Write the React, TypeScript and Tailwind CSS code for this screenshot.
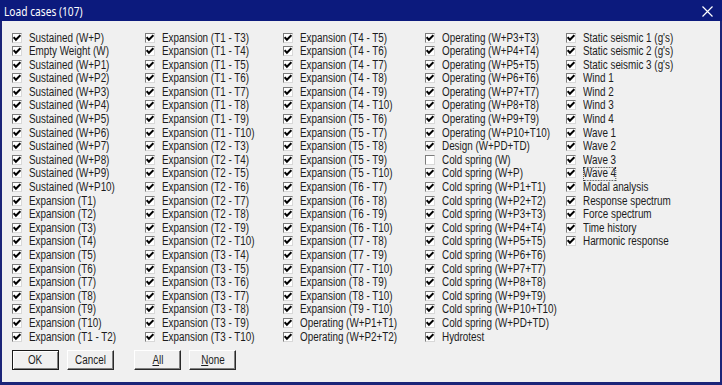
import React from "react";

type Item = { label: string; checked?: boolean; focus?: boolean };

const pairs: string[] = [];
for (let a = 1; a < 10; a++) {
  for (let b = a + 1; b <= 10; b++) pairs.push(`Expansion (T${a} - T${b})`);
}
const range = (n: number, f: (i: number) => string) =>
  Array.from({ length: n }, (_, i) => f(i + 1));

const columns: Item[][] = [
  [
    "Sustained (W+P)",
    "Empty Weight (W)",
    ...range(10, (i) => `Sustained (W+P${i})`),
    ...range(10, (i) => `Expansion (T${i})`),
    pairs[0],
  ].map((label) => ({ label })),
  pairs.slice(1, 24).map((label) => ({ label })),
  [
    ...pairs.slice(24),
    "Operating (W+P1+T1)",
    "Operating (W+P2+T2)",
  ].map((label) => ({ label })),
  [
    ...range(8, (i) => `Operating (W+P${i + 2}+T${i + 2})`),
    "Design (W+PD+TD)",
    "Cold spring (W)",
    "Cold spring (W+P)",
    ...range(10, (i) => `Cold spring (W+P${i}+T${i})`),
    "Cold spring (W+PD+TD)",
    "Hydrotest",
  ].map((label) => ({ label, checked: label !== "Cold spring (W)" })),
  [
    ...range(3, (i) => `Static seismic ${i} (g's)`),
    ...range(4, (i) => `Wind ${i}`),
    ...range(4, (i) => `Wave ${i}`),
    "Modal analysis",
    "Response spectrum",
    "Force spectrum",
    "Time history",
    "Harmonic response",
  ].map((label) => ({ label, focus: label === "Wave 4" })),
];

function CheckBox({ checked }: { checked: boolean }) {
  return (
    <div className="mt-[1px] w-[10px] h-[10px] shrink-0 bg-white border border-t-[#7c7c7c] border-l-[#7c7c7c] border-b-[#d8d8d8] border-r-[#d8d8d8] flex items-center justify-center">
      {checked && (
        <svg width="8" height="8" viewBox="0 0 8 8">
          <path d="M0.6 3.3 L2.9 5.8 L7.4 1.1" fill="none" stroke="#000" strokeWidth="2" />
        </svg>
      )}
    </div>
  );
}

function Row({ item }: { item: Item }) {
  return (
    <div className="h-[13.6px] flex items-start gap-[7px]">
      <CheckBox checked={item.checked !== false} />
      <span
        className={
          item.focus
            ? "inline-block origin-left scale-x-[0.79] text-[12.5px] leading-[13.6px] whitespace-nowrap outline outline-1 outline-dotted outline-[#333] -outline-offset-1"
            : "inline-block origin-left scale-x-[0.79] text-[12.5px] leading-[13.6px] whitespace-nowrap"
        }
      >
        {item.label}
      </span>
    </div>
  );
}

function Button({ children, isDefault }: { children: React.ReactNode; isDefault?: boolean }) {
  return (
    <button
      className={
        isDefault
          ? "w-[47px] h-[20px] bg-[#f0f0f0] border border-[#1a1a1a] shadow-[inset_1px_1px_0_#ffffff,inset_-1px_-1px_0_#808080] leading-none"
          : "w-[47px] h-[20px] bg-[#f0f0f0] border border-t-[#ffffff] border-l-[#ffffff] border-b-[#2a2a2a] border-r-[#2a2a2a] shadow-[inset_-1px_-1px_0_#808080] leading-none"
      }
    >
      <span className="inline-block scale-x-[0.79] text-[12.5px]">{children}</span>
    </button>
  );
}

export default function App() {
  return (
    <div className="w-[722px] h-[385px] bg-[#1b2478] flex flex-col font-['Liberation_Sans',Arial,sans-serif] text-[12px] text-[#1c1c1c]">
      <div className="h-[21px] shrink-0 bg-[#0c1a7d] flex items-center justify-between pl-[4px] pr-[9px] pt-[3px]">
        <span className="inline-block origin-left scale-x-[0.85] font-['Noto_Sans',sans-serif] text-[12px] text-white">
          Load cases (107)
        </span>
        <svg width="11" height="11" viewBox="0 0 11 11" className="-mt-[2px]">
          <path d="M0.5 0.5 L10.5 10.5 M10.5 0.5 L0.5 10.5" stroke="#fff" strokeWidth="1.2" />
        </svg>
      </div>
      <div className="flex-1 mx-[2px] mb-[3px] bg-[#f0f0f0] pl-[10px] pt-[10.5px]">
        <div className="grid grid-cols-[133px_138px_142px_141px_1fr]">
          {columns.map((col, ci) => (
            <div key={ci} className="flex flex-col">
              {col.map((item) => (
                <Row key={item.label} item={item} />
              ))}
            </div>
          ))}
        </div>
        <div className="mt-[6px] flex gap-[8px]">
          <Button isDefault>OK</Button>
          <Button>Cancel</Button>
          <div className="w-[4px]" />
          <Button>
            <span className="underline">A</span>ll
          </Button>
          <Button>
            <span className="underline">N</span>one
          </Button>
        </div>
      </div>
    </div>
  );
}
